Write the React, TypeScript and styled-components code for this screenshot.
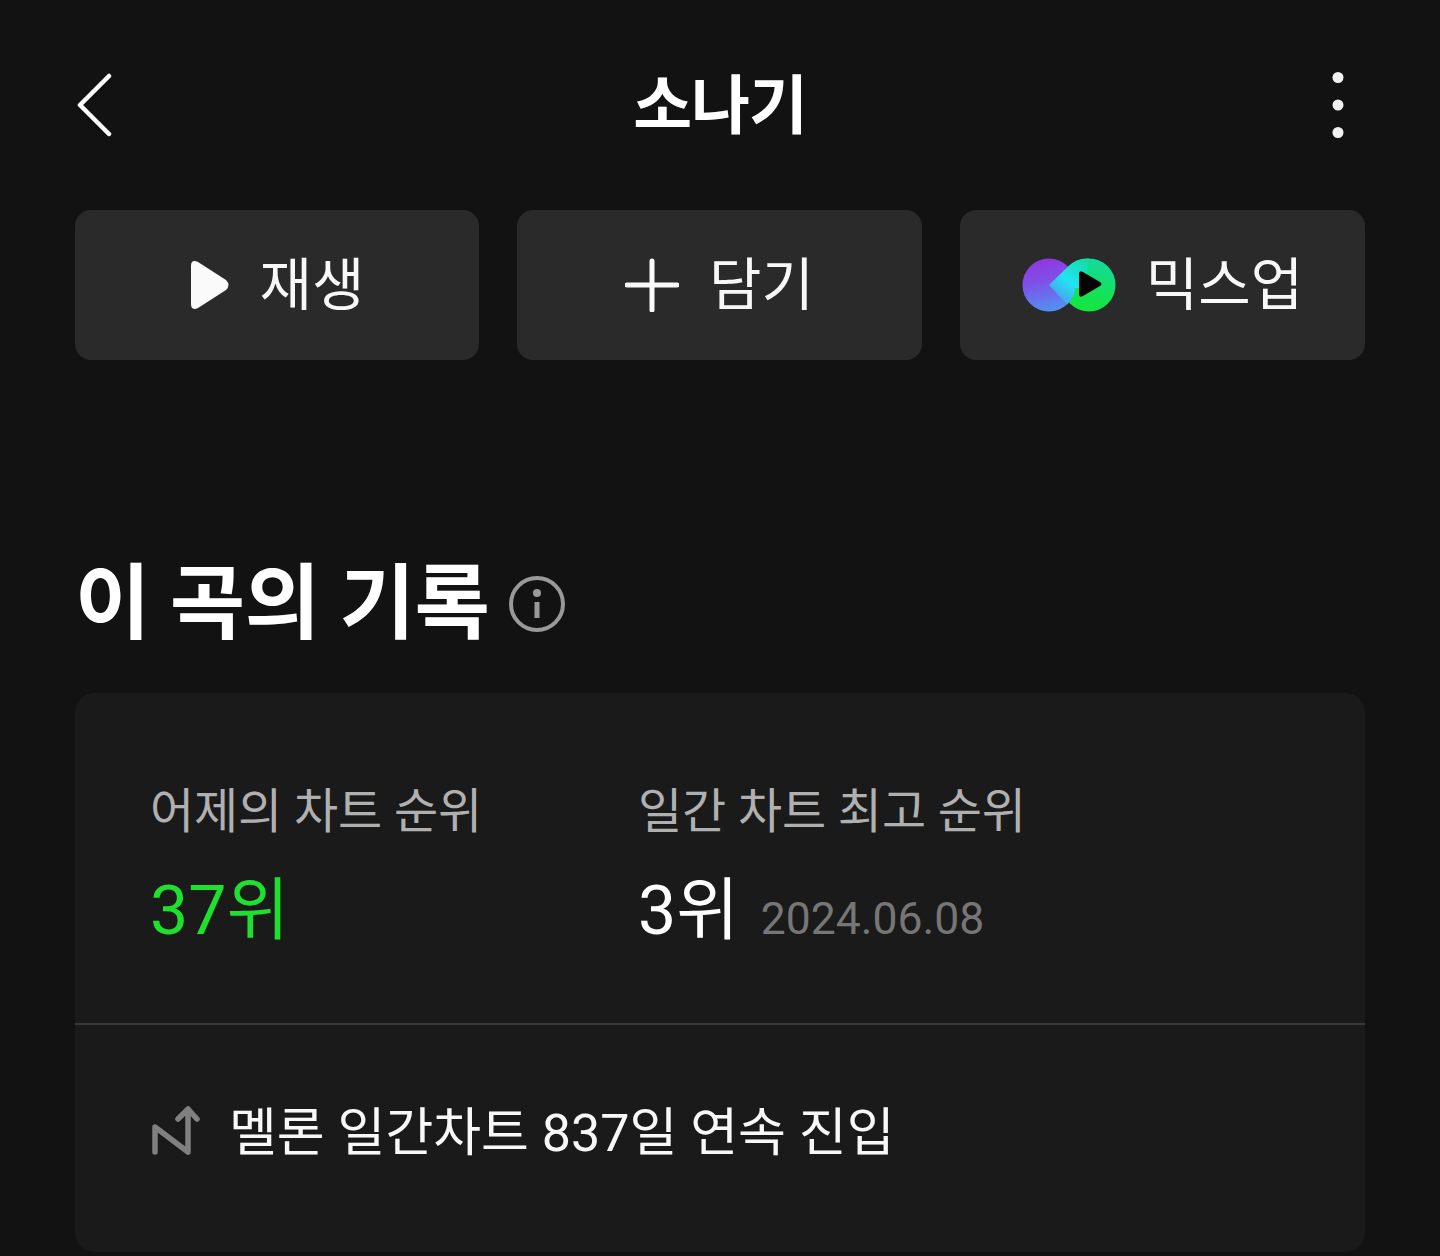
import React from "react";
import styled, { createGlobalStyle } from "styled-components";

const GlobalStyle = createGlobalStyle`
  html, body {
    margin: 0;
    padding: 0;
    background: #121212;
  }
  * { box-sizing: border-box; }
`;

const Page = styled.div`
  width: 1440px;
  height: 1256px;
  overflow: hidden;
  padding: 0 75px;
  background: #121212;
  color: #fff;
  font-family: Roboto, "Noto Sans CJK KR", sans-serif;
`;

const Header = styled.header`
  height: 210px;
  display: flex;
  align-items: center;
  justify-content: space-between;
`;

const Title = styled.h1`
  margin: 0 0 11px;
  font-size: 64px;
  font-weight: 700;
  letter-spacing: -1px;
`;

const IconButton = styled.div`
  width: 50px;
  display: flex;
  justify-content: ${(p: { $end?: boolean }) => (p.$end ? "flex-end" : "flex-start")};
  padding-right: ${(p: { $end?: boolean }) => (p.$end ? "21px" : "0")};
`;

const Actions = styled.div`
  display: grid;
  grid-template-columns: 404px 405px 405px;
  gap: 38px;
`;

const ActionButton = styled.div`
  height: 150px;
  border-radius: 16px;
  background: #2a2a2a;
  display: flex;
  align-items: center;
  justify-content: center;
  gap: 30px;
  font-size: 57px;
  font-weight: 400;
  color: #f8f8f8;
`;

const ActionLabel = styled.span`
  padding-bottom: 10px;
`;

const SectionHeading = styled.div`
  margin-top: 186px;
  height: 147px;
  display: flex;
  align-items: flex-start;
  gap: 20px;
`;

const SectionTitle = styled.h2`
  margin: 10px 0 0;
  font-size: 82px;
  line-height: 96px;
  font-weight: 700;
  letter-spacing: -0.5px;
`;

const InfoIcon = styled.svg`
  margin-top: 30px;
`;

const Card = styled.section`
  height: 559px;
  border-radius: 20px;
  background: #1a1a1a;
`;

const Stats = styled.div`
  height: 332px;
  padding: 89px 75px 0;
  display: flex;
  border-bottom: 2px solid #383838;
`;

const Stat = styled.div`
  width: ${(p: { $width: number }) => p.$width}px;
`;

const StatLabel = styled.div`
  font-size: 48px;
  line-height: 60px;
  color: #b0b0b0;
  letter-spacing: -0.1px;
`;

const StatValue = styled.div`
  margin-top: 29px;
  display: flex;
  align-items: baseline;
  gap: 22px;
`;

const Rank = styled.span`
  font-size: 68px;
  line-height: 80px;
  color: ${(p: { $accent?: boolean }) => (p.$accent ? "#1ee02f" : "#fff")};
`;

const RankDate = styled.span`
  font-size: 44.5px;
  color: #767676;
`;

const Streak = styled.div`
  height: 212px;
  padding: 0 75px 6px;
  display: flex;
  align-items: center;
  gap: 28px;
  font-size: 52px;
  color: #f8f8f8;
`;

const StreakIcon = styled.svg`
  margin: 6px 0 0 1px;
`;

function MixupLogo() {
  return (
    <svg width="94" height="54" viewBox="0 0 94 54">
      <defs>
        <linearGradient id="mixLeft" gradientUnits="userSpaceOnUse" x1="18" y1="2" x2="28" y2="54">
          <stop offset="0" stopColor="#9038e0" />
          <stop offset="0.4" stopColor="#7f50e8" />
          <stop offset="1" stopColor="#5094f2" />
        </linearGradient>
        <linearGradient id="mixRight" x1="0.6" y1="0" x2="0.4" y2="1">
          <stop offset="0" stopColor="#12dba0" />
          <stop offset="0.6" stopColor="#14e25a" />
          <stop offset="1" stopColor="#14e63c" />
        </linearGradient>
        <linearGradient id="mixBand" gradientUnits="userSpaceOnUse" x1="34" y1="44" x2="68" y2="2">
          <stop offset="0" stopColor="#5094f2" />
          <stop offset="0.45" stopColor="#22e4f2" />
          <stop offset="1" stopColor="#12dba0" />
        </linearGradient>
      </defs>
      <circle cx="67" cy="27" r="26.5" fill="url(#mixRight)" />
      <circle cx="27" cy="27" r="26.5" fill="url(#mixLeft)" />
      <path
        d="M27 27 L46 8.5 A26.5 26.5 0 0 1 67 0.5 L62 30 L53.3 30 A26.5 26.5 0 0 1 45 46.5 Z"
        fill="url(#mixBand)"
      />
      <path d="M57 16 Q57 12 61 14 L78 24 Q81 26 78 28 L61 38 Q57 40 57 36 Z" fill="#050505" />
    </svg>
  );
}

export default function App() {
  return (
    <Page>
      <GlobalStyle />
      <Header>
        <IconButton>
          <svg width="40" height="64" viewBox="0 0 40 64" fill="none" stroke="#fff" strokeWidth="4.5" strokeLinecap="round" strokeLinejoin="round">
            <path d="M34 3 L5 32 L34 61" />
          </svg>
        </IconButton>
        <Title>소나기</Title>
        <IconButton $end>
          <svg width="12" height="66" viewBox="0 0 12 66" fill="#f2f2f2">
            <circle cx="6" cy="5.5" r="5.5" />
            <circle cx="6" cy="33" r="5.5" />
            <circle cx="6" cy="60.5" r="5.5" />
          </svg>
        </IconButton>
      </Header>

      <Actions>
        <ActionButton>
          <svg width="40" height="50" viewBox="0 0 40 50" fill="#fafafa">
            <path d="M1 6 Q1 -1 8 2 L36 20 Q41 25 36 30 L8 48 Q1 51 1 44 Z" />
          </svg>
          <ActionLabel>재생</ActionLabel>
        </ActionButton>
        <ActionButton>
          <svg width="54" height="54" viewBox="0 0 54 54" stroke="#fafafa" strokeWidth="5" strokeLinecap="round">
            <path d="M27 3 V52 M2 27 H52" />
          </svg>
          <ActionLabel>담기</ActionLabel>
        </ActionButton>
        <ActionButton>
          <MixupLogo />
          <ActionLabel>믹스업</ActionLabel>
        </ActionButton>
      </Actions>

      <SectionHeading>
        <SectionTitle>이 곡의 기록</SectionTitle>
        <InfoIcon width="56" height="56" viewBox="0 0 56 56" fill="none">
          <circle cx="28" cy="28" r="26" stroke="#999" strokeWidth="4" />
          <circle cx="28" cy="17" r="4" fill="#999" />
          <rect x="25.5" y="26" width="5" height="16" fill="#999" />
        </InfoIcon>
      </SectionHeading>

      <Card>
        <Stats>
          <Stat $width={488}>
            <StatLabel>어제의 차트 순위</StatLabel>
            <StatValue>
              <Rank $accent>37위</Rank>
            </StatValue>
          </Stat>
          <Stat $width={600}>
            <StatLabel>일간 차트 최고 순위</StatLabel>
            <StatValue>
              <Rank>3위</Rank>
              <RankDate>2024.06.08</RankDate>
            </StatValue>
          </Stat>
        </Stats>
        <Streak>
          <StreakIcon width="50" height="52" viewBox="0 0 50 52" fill="none" stroke="#808080" strokeWidth="5.5" strokeLinecap="round" strokeLinejoin="round">
            <path d="M4 47 V22 L37 47 V4 M27 14 L37 4 L46 14" />
          </StreakIcon>
          멜론 일간차트 837일 연속 진입
        </Streak>
      </Card>
    </Page>
  );
}
